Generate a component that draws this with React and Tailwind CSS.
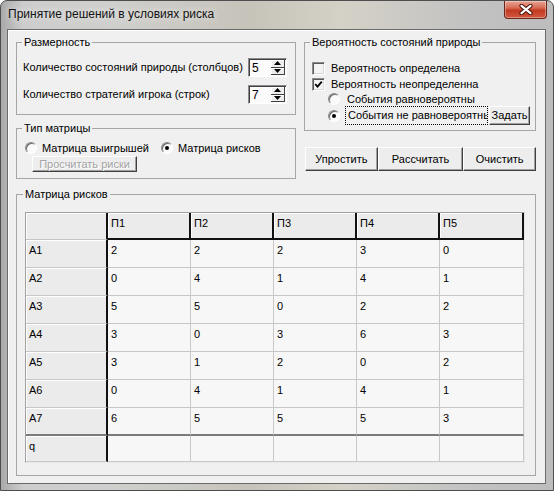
import React from "react";

const btn3d =
  "bg-[#ededed] border border-t-white border-l-white border-r-[#404040] border-b-[#404040] shadow-[inset_-1px_-1px_0_#a0a0a0] flex items-center justify-center";

function Checkbox({ checked }) {
  return (
    <span className="w-[13px] h-[13px] shrink-0 border border-t-[#8a8a8a] border-l-[#8a8a8a] border-b-white border-r-white shadow-[inset_1px_1px_0_#5a5a5a,inset_-1px_-1px_0_#d8d8d8] bg-[#f4f4f4] flex items-center justify-center">
      {checked && (
        <svg width="9" height="9" viewBox="0 0 9 9">
          <path d="M1.2 4.2 L3.5 6.6 L7.8 1.6" stroke="#000" strokeWidth="1.8" fill="none" />
        </svg>
      )}
    </span>
  );
}

function Radio({ checked }) {
  return (
    <span className="w-[12px] h-[12px] shrink-0 rounded-full border border-t-[#8a8a8a] border-l-[#8a8a8a] border-r-white border-b-white shadow-[inset_1px_1px_0_#6a6a6a] bg-[#fafafa] flex items-center justify-center">
      {checked && <span className="w-[4px] h-[4px] rounded-full bg-black" />}
    </span>
  );
}

function Spin({ v }) {
  return (
    <div className="w-[39px] h-[19px] flex border border-t-[#8a8a8a] border-l-[#8a8a8a] border-r-white border-b-white shadow-[inset_1px_1px_0_#404040] bg-[#fbfbfb]">
      <span className="flex-1 pl-[3px] pt-[2px] text-[12px] leading-[14px]">{v}</span>
      <div className="w-[15px] flex flex-col pt-[1px] pb-[1px] pr-[1px]">
        <span className="flex-1 flex items-center justify-center bg-[#ededed] border-r border-b border-r-[#404040] border-b-[#404040] shadow-[inset_1px_1px_0_#fff]">
          <svg width="7" height="4" viewBox="0 0 7 4">
            <path d="M3.5 0 L7 4 L0 4 Z" fill="#000" />
          </svg>
        </span>
        <span className="flex-1 flex items-center justify-center bg-[#ededed] border-r border-b border-r-[#404040] border-b-[#404040] shadow-[inset_1px_1px_0_#fff]">
          <svg width="7" height="4" viewBox="0 0 7 4">
            <path d="M0 0 L7 0 L3.5 4 Z" fill="#000" />
          </svg>
        </span>
      </div>
    </div>
  );
}

const rows = [
  ["A1", 2, 2, 2, 3, 0],
  ["A2", 0, 4, 1, 4, 1],
  ["A3", 5, 5, 0, 2, 2],
  ["A4", 3, 0, 3, 6, 3],
  ["A5", 3, 1, 2, 0, 2],
  ["A6", 0, 4, 1, 4, 1],
  ["A7", 6, 5, 5, 5, 3],
];

function Grid() {
  const fixed = "bg-[#ebebeb] shadow-[inset_1px_1px_0_#fff] pl-[3px] pt-[4px]";
  const data = "bg-[#f7f7f7] pl-[3px] pt-[4px]";
  return (
    <div className="w-[500px] border-t border-l border-[#a0a0a0] border-r border-b border-r-[#e8e8e8] border-b-[#e8e8e8]">
      <div className="grid grid-cols-[82px_83px_83px_83px_83px_84px] text-[11px] leading-[13px]">
        <div className={`${fixed} h-[27px] border-r-2 border-b border-r-[#111] border-b-[#c4c4c4]`} />
        {["П1", "П2", "П3", "П4", "П5"].map((h) => (
          <div key={h} className={`${fixed} h-[27px] border-r-2 border-b-2 border-[#111]`}>
            {h}
          </div>
        ))}
        {rows.map((r, i) => {
          const last = i === rows.length - 1;
          const bb = last ? "border-b-2 border-b-[#7a7a7a]" : "border-b border-b-[#c8c8c8]";
          return (
            <React.Fragment key={r[0]}>
              <div className={`${fixed} h-[28px] border-r-2 border-r-[#111] ${bb}`}>{r[0]}</div>
              {r.slice(1).map((v, j) => (
                <div key={j} className={`${data} h-[28px] border-r border-r-[#c8c8c8] ${bb}`}>
                  {v}
                </div>
              ))}
            </React.Fragment>
          );
        })}
        <div className={`${fixed} h-[26px] border-r-2 border-r-[#111] border-b border-b-[#c8c8c8]`}>q</div>
        {[0, 1, 2, 3, 4].map((j) => (
          <div key={j} className={`${data} h-[26px] border-r border-b border-[#c8c8c8]`} />
        ))}
      </div>
    </div>
  );
}

export default function App() {
  return (
    <div className="w-[554px] h-[491px] flex flex-col overflow-hidden rounded-t-[7px] border border-[#4e4e4e] bg-[linear-gradient(90deg,#a9a9a9_0%,#cdcdcd_4%,#cfcfcd_20%,#c6c3ba_45%,#d4d1c7_62%,#c2c2c2_85%,#bdbdbd_100%)] font-['Liberation_Sans',Arial,sans-serif] text-black">
      <div className="h-[28px] shrink-0 flex justify-between">
        <div className="pl-[7px] pt-[6px] text-[12px] leading-[15px] text-[#111] [text-shadow:0_0_6px_#f4f4f4]">
          Принятие решений в условиях риска
        </div>
        <div className="mr-[6px] w-[43px] h-[18px] rounded-b-[4px] border border-t-0 border-[#6b2418] bg-[linear-gradient(180deg,#eaa596_0%,#d76a55_40%,#c23a22_55%,#d0583f_100%)] shadow-[inset_0_0_0_1px_rgba(255,255,255,0.35)] flex items-center justify-center">
          <svg width="14" height="11" viewBox="0 0 14 11">
            <path d="M2.5 1.8 L11.5 9.2 M11.5 1.8 L2.5 9.2" stroke="#4a1208" strokeWidth="4.2" strokeLinecap="round" />
            <path d="M2.5 1.8 L11.5 9.2 M11.5 1.8 L2.5 9.2" stroke="#fff" strokeWidth="2.2" strokeLinecap="round" />
          </svg>
        </div>
      </div>

      <div className="ml-[6px] w-[539px] h-[455px] border border-[#6b6b6b] bg-[#f0f0f0] shadow-[inset_1px_1px_0_#fff] pl-[8px] pt-[6px] text-[11px] leading-[13px]">
        <div className="flex gap-[8px]">
          {/* left column */}
          <div className="w-[280px] flex flex-col">
            <fieldset className="h-[79px] border border-[#a6a6a6]">
              <legend className="ml-[5px] px-[2px] leading-[13px]">Размерность</legend>
              <div className="pt-[9px] pl-[6px] pr-[8px] flex flex-col gap-[8px]">
                <div className="h-[19px] flex items-center justify-between">
                  <span>Количество состояний природы (столбцов)</span>
                  <Spin v="5" />
                </div>
                <div className="h-[19px] flex items-center justify-between">
                  <span>Количество стратегий игрока (строк)</span>
                  <Spin v="7" />
                </div>
              </div>
            </fieldset>
            <fieldset className="mt-[7px] h-[57px] border border-[#a6a6a6]">
              <legend className="ml-[5px] px-[2px] leading-[13px]">Тип матрицы</legend>
              <div className="pt-[6px] pl-[8px]">
                <div className="h-[14px] flex items-center">
                  <div className="w-[136px] flex items-center gap-[5px]">
                    <Radio />
                    <span>Матрица выигрышей</span>
                  </div>
                  <div className="flex items-center gap-[5px]">
                    <Radio checked />
                    <span>Матрица рисков</span>
                  </div>
                </div>
                <div className={`${btn3d} mt-[1px] ml-[7px] w-[105px] h-[16px] text-[#a3a3a3] [text-shadow:1px_1px_0_#fff]`}>
                  Просчитать риски
                </div>
              </div>
            </fieldset>
          </div>

          {/* right column */}
          <div className="w-[232px] flex flex-col">
            <fieldset className="h-[95px] border border-[#a6a6a6]">
              <legend className="ml-[5px] px-[2px] leading-[13px]">Вероятность состояний природы</legend>
              <div className="pt-[11px] pl-[7px] flex flex-col">
                <div className="h-[16px] flex items-center gap-[6px]">
                  <Checkbox />
                  <span>Вероятность определена</span>
                </div>
                <div className="h-[16px] flex items-center gap-[6px]">
                  <Checkbox checked />
                  <span>Вероятность неопределенна</span>
                </div>
                <div className="h-[14px] ml-[16px] flex items-center gap-[7px]">
                  <Radio />
                  <span>События равновероятны</span>
                </div>
                <div className="h-[19px] ml-[16px] flex items-center">
                  <Radio checked />
                  <span className="ml-[5px] w-[143px] h-[19px] border border-dotted border-black overflow-hidden whitespace-nowrap pl-[2px] leading-[17px]">
                    События не равновероятны
                  </span>
                  <span className={`${btn3d} ml-[1px] w-[41px] h-[19px]`}>Задать</span>
                </div>
              </div>
            </fieldset>
            <div className="mt-[16px] ml-[1px] flex">
              <div className={`${btn3d} w-[73px] h-[24px]`}>Упростить</div>
              <div className={`${btn3d} w-[86px] h-[24px]`}>Рассчитать</div>
              <div className={`${btn3d} w-[73px] h-[24px]`}>Очистить</div>
            </div>
          </div>
        </div>

        <fieldset className="mt-[9px] w-[520px] h-[288px] border border-[#a6a6a6]">
          <legend className="ml-[6px] px-[2px] leading-[13px]">Матрица рисков</legend>
          <div className="pt-[11px] pl-[8px]">
            <Grid />
          </div>
        </fieldset>
      </div>
    </div>
  );
}
